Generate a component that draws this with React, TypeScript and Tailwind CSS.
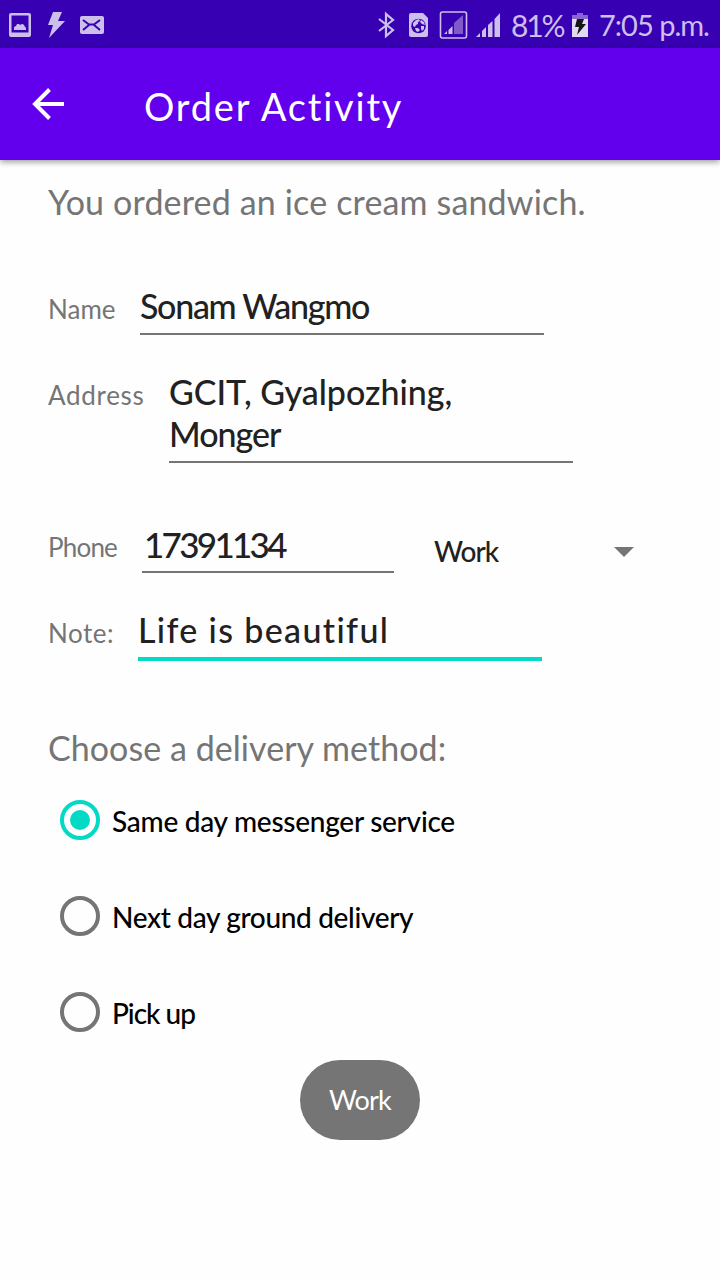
import React from "react";

const methods = [
  { label: "Same day messenger service", checked: true, spacing: "tracking-[-0.26px]" },
  { label: "Next day ground delivery", checked: false, spacing: "tracking-[-0.34px]" },
  { label: "Pick up", checked: false, spacing: "tracking-[-1px]" },
];

function StatusBar() {
  return (
    <header className="flex h-12 items-center bg-[#3700b3] text-[#cdbfec]">
      <svg className="h-12 w-[110px] shrink-0" viewBox="0 0 110 48" fill="currentColor">
        <path fillRule="evenodd" d="M11 13h18q2 0 2 2v20q0 2-2 2H11q-2 0-2-2V15q0-2 2-2zM11.500 15.500v17h17v-17z" />
        <path d="M14 30v-3l2-1 1-2h2l1 1 2-1h1l3 4v2z" />
        <path d="M53 12h9l-4 9h7L49 38l4-13h-5z" />
        <rect x="80" y="16" width="24" height="18" rx="2" />
        <path d="M83 20l6 4.500h5l6-4.500M83 30l6-5M100 30l-6-5" fill="none" stroke="#3700b3" strokeWidth="2" />
      </svg>
      <svg className="ml-auto h-12 w-[141px] shrink-0" viewBox="370 0 141 48" fill="currentColor">
        <path d="M379 19l14 11-7 6V14l7 6-14 11" fill="none" stroke="currentColor" strokeWidth="2.2" />
        <path d="M411 13h12l5 5v17q0 2-2 2h-15q-2 0-2-2V15q0-2 2-2z" />
        <circle cx="418.500" cy="26" r="7.300" fill="#3700b3" />
        <path d="M413 23l3-3 3-1 1 2-2 1v2l-2 1-1 2-2-1zM421 20l3 2 1 3-3-1-2-2zM415 28l3 0 2 2-2 2-2-1zM421 26l3 0 0 3-2 2-1-2z" />
        <rect x="440.500" y="12" width="26" height="26" rx="2" fill="none" stroke="currentColor" strokeWidth="1.600" />
        <path d="M454 23l9-8v19h-9z" fill="#8159cb" />
        <path d="M444 34l3-3v3zM448.500 30l4-4v8h-4z" />
        <path d="M476 37l4-4v4zM482 31l4-4v10h-4zM488 25l4.500-4v16H488zM494.500 19l5.500-6v24h-5.500z" />
      </svg>
      <span className="w-[61px] shrink-0 whitespace-nowrap pt-[2px] text-[30px] leading-[50px] tracking-[-2.2px]">81%</span>
      <svg className="h-12 w-[27px] shrink-0" viewBox="572 0 27 48">
        <path d="M572 15h5v-2h6v2h5v4h-16z" fill="#8966cf" />
        <path d="M572 19h16v18h-16z" fill="#e2d9f5" />
        <path d="M577 19h7l-2 5h4l-9 11 2-8h-4z" fill="#151515" />
      </svg>
      <span className="w-[121px] shrink-0 whitespace-nowrap pt-[2px] text-[29px] leading-[50px] tracking-[-1px]">7:05 p.m.</span>
    </header>
  );
}

export default function App() {
  return (
    <div className="flex h-[1280px] w-[720px] flex-col overflow-hidden bg-[#fefefe] font-['Lato','Open_Sans',sans-serif] whitespace-nowrap text-[#757575] [font-variant-ligatures:none]">
      <StatusBar />
      <div className="flex h-28 shrink-0 items-center bg-[#6200ee] text-white shadow-[0_2px_6px_rgba(0,0,0,0.4)]">
        <svg className="ml-8 h-8 w-8" viewBox="0 0 32 32" fill="none" stroke="white" strokeWidth="4">
          <path d="M32 16H4M17.500 1.500L3 16l14.500 14.500" />
        </svg>
        <h1 className="ml-20 pt-1 text-[38px] leading-[48px] tracking-[1.8px]">Order Activity</h1>
      </div>

      <main className="flex flex-col pl-12">
        <p className="text-[34px] leading-[84px] tracking-[0.16px]">You ordered an ice cream sandwich.</p>

        <div className="mt-9 flex h-[55px]">
          <label className="w-[92px] shrink-0 text-[26px] leading-[58px]">Name</label>
          <div className="h-[55px] w-[404px] border-b-2 border-[#757575] text-[34px] leading-[52px] font-medium tracking-[-1.3px] text-[#212121]">Sonam Wangmo</div>
        </div>

        <div className="mt-[31px] flex h-[97px]">
          <label className="w-[121px] shrink-0 text-[26px] leading-[58px] tracking-[0.7px]">Address</label>
          <div className="h-[97px] w-[404px] border-b-2 border-[#757575] pt-[5px] text-[34px] leading-[42px] font-medium text-[#212121]">
            <div>GCIT, Gyalpozhing,</div>
            <div className="tracking-[-1px]">Monger</div>
          </div>
        </div>

        <div className="mt-[57px] flex h-[53px]">
          <label className="w-[94px] shrink-0 text-[26px] leading-[54px] tracking-[-0.8px]">Phone</label>
          <div className="h-[53px] w-[252px] border-b-2 border-[#757575] pl-[2px] text-[35px] leading-[49px] font-medium tracking-[-2.7px] text-[#212121]">17391134</div>
          <div className="ml-10 flex w-[200px] items-start justify-between">
            <span className="text-[28px] leading-[62px] font-medium tracking-[-1px] text-[#212121]">Work</span>
            <svg className="mt-[27px] h-[10px] w-5" viewBox="0 0 20 10" fill="#757575">
              <path d="M0 0h20L10 10z" />
            </svg>
          </div>
        </div>

        <div className="mt-[33px] flex h-[55px]">
          <label className="w-[90px] shrink-0 text-[26px] leading-[54px] tracking-[0.5px]">Note:</label>
          <div className="h-[55px] w-[404px] border-b-4 border-[#03dac5] text-[34px] leading-[48px] font-medium tracking-[1.35px] text-[#212121]">Life is beautiful</div>
        </div>

        <h2 className="mt-[63px] text-[34px] leading-[48px] tracking-[0.05px]">Choose a delivery method:</h2>

        <div className="flex flex-col pl-3">
          {methods.map((m) => (
            <label key={m.label} className="flex h-24 items-center gap-3 text-black">
              <span className={m.checked ? "flex h-10 w-10 items-center justify-center rounded-full border-4 border-[#03dac5]" : "h-10 w-10 rounded-full border-4 border-[#757575]"}>
                {m.checked && <span className="h-5 w-5 rounded-full bg-[#03dac5]" />}
              </span>
              <span className={`pt-[2px] text-[28px] leading-[40px] font-medium ${m.spacing}`}>{m.label}</span>
            </label>
          ))}
        </div>
      </main>

      <div className="flex h-20 w-[120px] shrink-0 items-center justify-center self-center rounded-full bg-[#757575] text-[27px] tracking-[-0.8px] text-white">Work</div>
    </div>
  );
}
